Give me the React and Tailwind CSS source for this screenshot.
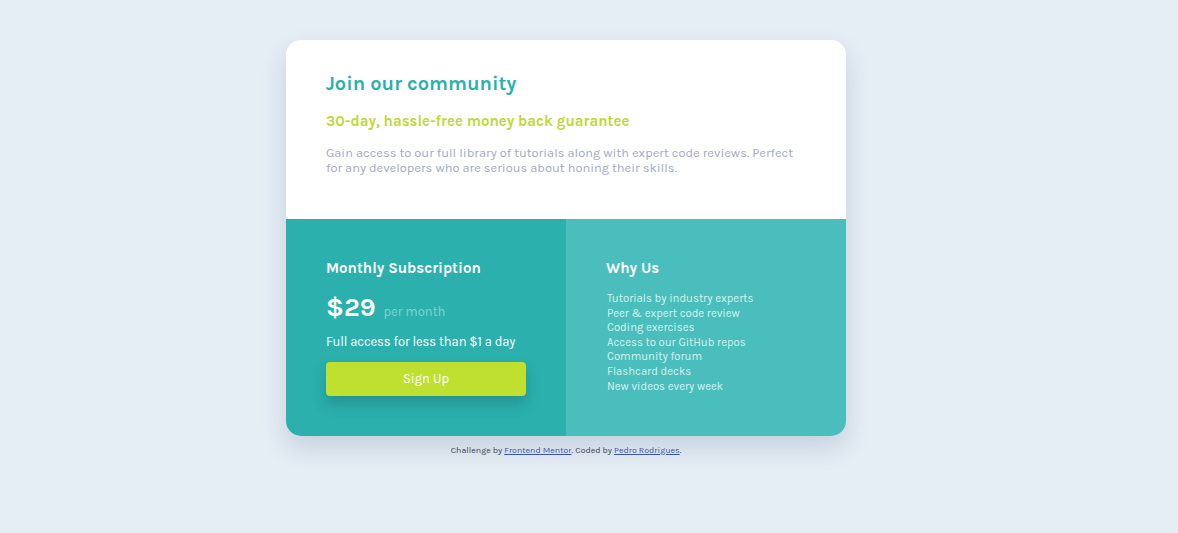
export default function App() {
  const items = [
    "Tutorials by industry experts",
    "Peer & expert code review",
    "Coding exercises",
    "Access to our GitHub repos",
    "Community forum",
    "Flashcard decks",
    "New videos every week",
  ];
  return (
    <div className="min-h-[533px] w-full bg-[#e5edf5] flex flex-col items-center pt-[40px] pr-[46px]" style={{ fontFamily: "Karla, Lato, 'Liberation Sans', sans-serif" }}>
      <div className="w-[560px] rounded-[15px] overflow-hidden shadow-[0_12px_24px_rgba(60,90,120,0.18)]">
        <div className="bg-white h-[179px] px-[40px] pt-[32px]">
          <h1 className="text-[20px] leading-[24px] font-bold text-[#2bb0ae]">Join our community</h1>
          <h2 className="mt-[16px] text-[15px] leading-[18px] font-bold text-[#bfd834]">30-day, hassle-free money back guarantee</h2>
          <p className="mt-[16px] text-[12.85px] leading-[14.5px] text-[#a3aac0]">
            Gain access to our full library of tutorials along with expert code reviews. Perfect for any developers who are serious about honing their skills.
          </p>
        </div>
        <div className="grid grid-cols-2 h-[217px]">
          <div className="bg-[#2bb0ae] px-[40px] pt-[40px]">
            <h3 className="text-[15px] leading-[18px] font-bold text-white">Monthly Subscription</h3>
            <div className="mt-[16px] flex items-center gap-[8px]">
              <span className="text-[26px] leading-[30px] font-bold text-white">$29</span>
              <span className="text-[13px] text-[#80d3d1] mt-[7px]">per month</span>
            </div>
            <p className="mt-[11px] text-[13px] leading-[16px] text-white tracking-[-0.1px]">Full access for less than $1 a day</p>
            <button className="mt-[12px] w-[200px] h-[34px] rounded-[4px] bg-[#bfe02f] text-white text-[13px] shadow-[0_8px_14px_rgba(20,80,80,0.3)]">Sign Up</button>
          </div>
          <div className="bg-[#4abebd] px-[40px] pt-[40px]">
            <h3 className="text-[15px] leading-[18px] font-bold text-white">Why Us</h3>
            <ul className="mt-[15px] pl-[1px] text-[11.3px] leading-[14.6px] text-[#d7f2f1]">
              {items.map((t) => (
                <li key={t}>{t}</li>
              ))}
            </ul>
          </div>
        </div>
      </div>
      <p className="mt-[8px] text-[8.85px] text-[#3b3f55]">
        Challenge by <a href="#" className="underline text-[#3e52a3]">Frontend Mentor</a>. Coded by <a href="#" className="underline text-[#3e52a3]">Pedro Rodrigues</a>.
      </p>
    </div>
  );
}
